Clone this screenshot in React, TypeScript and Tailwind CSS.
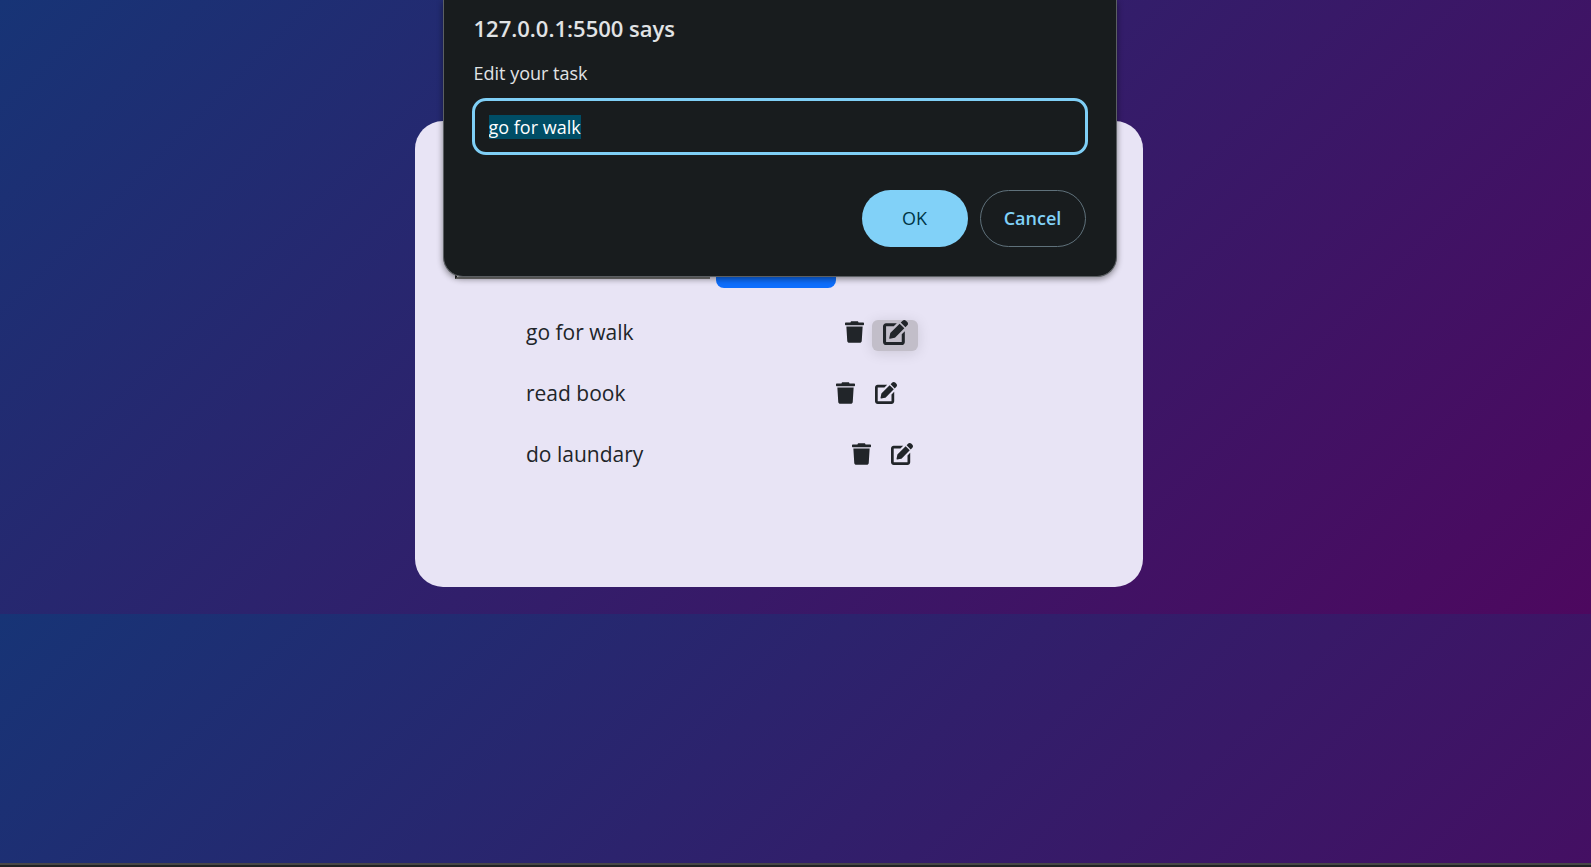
type IconProps = { className: string };

const tasks = [
  { name: 'go for walk', textWidth: 'w-[319px]', active: true },
  { name: 'read book', textWidth: 'w-[310px]', active: false },
  { name: 'do laundary', textWidth: 'w-[326px]', active: false },
];

function TrashIcon({ className }: IconProps) {
  return (
    <svg viewBox="0 0 448 512" fill="currentColor" className={className} aria-hidden="true">
      <path d="M53.21 467c1.562 24.84 23.02 45 47.9 45h245.8c24.88 0 46.33-20.16 47.9-45L416 128H32L53.21 467zM432 32H320l-11.58-23.16c-2.709-5.42-8.25-8.844-14.31-8.844H153.9c-6.061 0-11.6 3.424-14.31 8.844L128 32H16c-8.836 0-16 7.162-16 16V80c0 8.836 7.164 16 16 16h416c8.838 0 16-7.164 16-16V48C448 39.16 440.8 32 432 32z" />
    </svg>
  );
}

function EditIcon({ className }: IconProps) {
  return (
    <svg viewBox="0 0 512 512" fill="currentColor" className={className} aria-hidden="true">
      <path d="M383.1 448H63.1V128h156.1l64-64H63.1C28.65 64 0 92.65 0 128v320c0 35.35 28.65 64 64 64h319.1c35.34 0 64-28.65 64-64l-.0039-220.1l-63.1 63.99V448zM497.9 42.19l-28.13-28.14c-18.75-18.75-49.14-18.75-67.88 0l-38.62 38.63l96.01 96.01l38.62-38.63C516.7 91.33 516.7 60.94 497.9 42.19zM147.3 274.4l-19.04 95.22c-1.678 8.396 5.725 15.8 14.12 14.12l95.23-19.04c4.646-.9297 8.912-3.213 12.26-6.562l186.8-186.8l-96.01-96.01L153.8 262.2C150.5 265.5 148.2 269.8 147.3 274.4z" />
    </svg>
  );
}

function PromptDialog() {
  return (
    <div
      role="dialog"
      aria-labelledby="prompt-title"
      className="mx-auto w-full max-w-[674px] rounded-b-[20px] border border-t-0 border-[#5b5f63] bg-[#181c1e] px-7 pt-3 pb-[29px] text-[#e1e3e5] shadow-[0_2px_6px_rgba(0,0,0,0.45)]"
    >
      <h1 id="prompt-title" className="pl-0.5 text-[22px] leading-8 font-semibold">127.0.0.1:5500 says</h1>
      <label htmlFor="task-edit" className="mt-[13px] block pl-0.5 text-[18px] leading-8">Edit your task</label>
      <div className="mt-[9px] flex h-[57px] items-center rounded-[14px] border-3 border-[#7fcff6] px-3.5">
        <input
          id="task-edit"
          autoFocus
          onFocus={(e) => e.target.select()}
          defaultValue="go for walk"
          className="w-full bg-transparent text-[18px] leading-6 text-white outline-none selection:bg-[#004d65] selection:text-white"
        />
      </div>
      <div className="mt-[35px] flex justify-end gap-3 pr-0.5 text-[18px] font-semibold">
        <button type="button" className="h-[57px] w-[106px] rounded-full bg-[#81d1f8] font-medium text-[#003546]">OK</button>
        <button type="button" className="h-[57px] w-[106px] rounded-full border border-[#5f717b] text-[#81d1f8]">Cancel</button>
      </div>
    </div>
  );
}

export default function App() {
  return (
    <div className="flex min-h-screen flex-col font-['Open_Sans','Noto_Sans',sans-serif]">
      <div className="relative flex-1 bg-[linear-gradient(135deg,#173476,#4d085f)] bg-[length:100%_614px] pt-[121px] pr-[33px]">
        <main className="mx-auto min-h-[466px] w-full max-w-[728px] rounded-[28px] bg-[#e8e4f5] px-10 pt-[119px]">
          <div className="flex items-center gap-1.5">
            <input
              aria-label="New task"
              className="h-[30px] w-[255px] border-2 border-[#767676] bg-white px-1 [border-style:inset]"
            />
            <button type="button" aria-label="Add task" className="h-12 w-[120px] rounded-lg bg-[#0d6efd]" />
          </div>
          <ul className="mt-[14px] pl-[71px] text-[21px] text-[#212529]">
            {tasks.map((task) => (
              <li key={task.name} className="flex h-[61px] items-center">
                <span className={`${task.textWidth} shrink-0`}>{task.name}</span>
                <button type="button" aria-label={`Delete ${task.name}`} className="pb-0.5">
                  <TrashIcon className="h-[22px] w-[19px]" />
                </button>
                {task.active ? (
                  <button
                    type="button"
                    aria-label={`Edit ${task.name}`}
                    className="mt-1.5 ml-2 flex h-[31px] w-[46px] items-start justify-center rounded-md bg-[#c2bec9] shadow-[0_2px_14px_rgba(0,0,0,0.12)]"
                  >
                    <EditIcon className="size-[25px]" />
                  </button>
                ) : (
                  <button type="button" aria-label={`Edit ${task.name}`} className="ml-5 pb-0.5">
                    <EditIcon className="size-[22px]" />
                  </button>
                )}
              </li>
            ))}
          </ul>
        </main>
        <div className="absolute inset-x-0 top-0 pr-8">
          <PromptDialog />
        </div>
      </div>
      <footer className="h-1 border-t-2 border-[#474747] bg-[#202124]" />
    </div>
  );
}
